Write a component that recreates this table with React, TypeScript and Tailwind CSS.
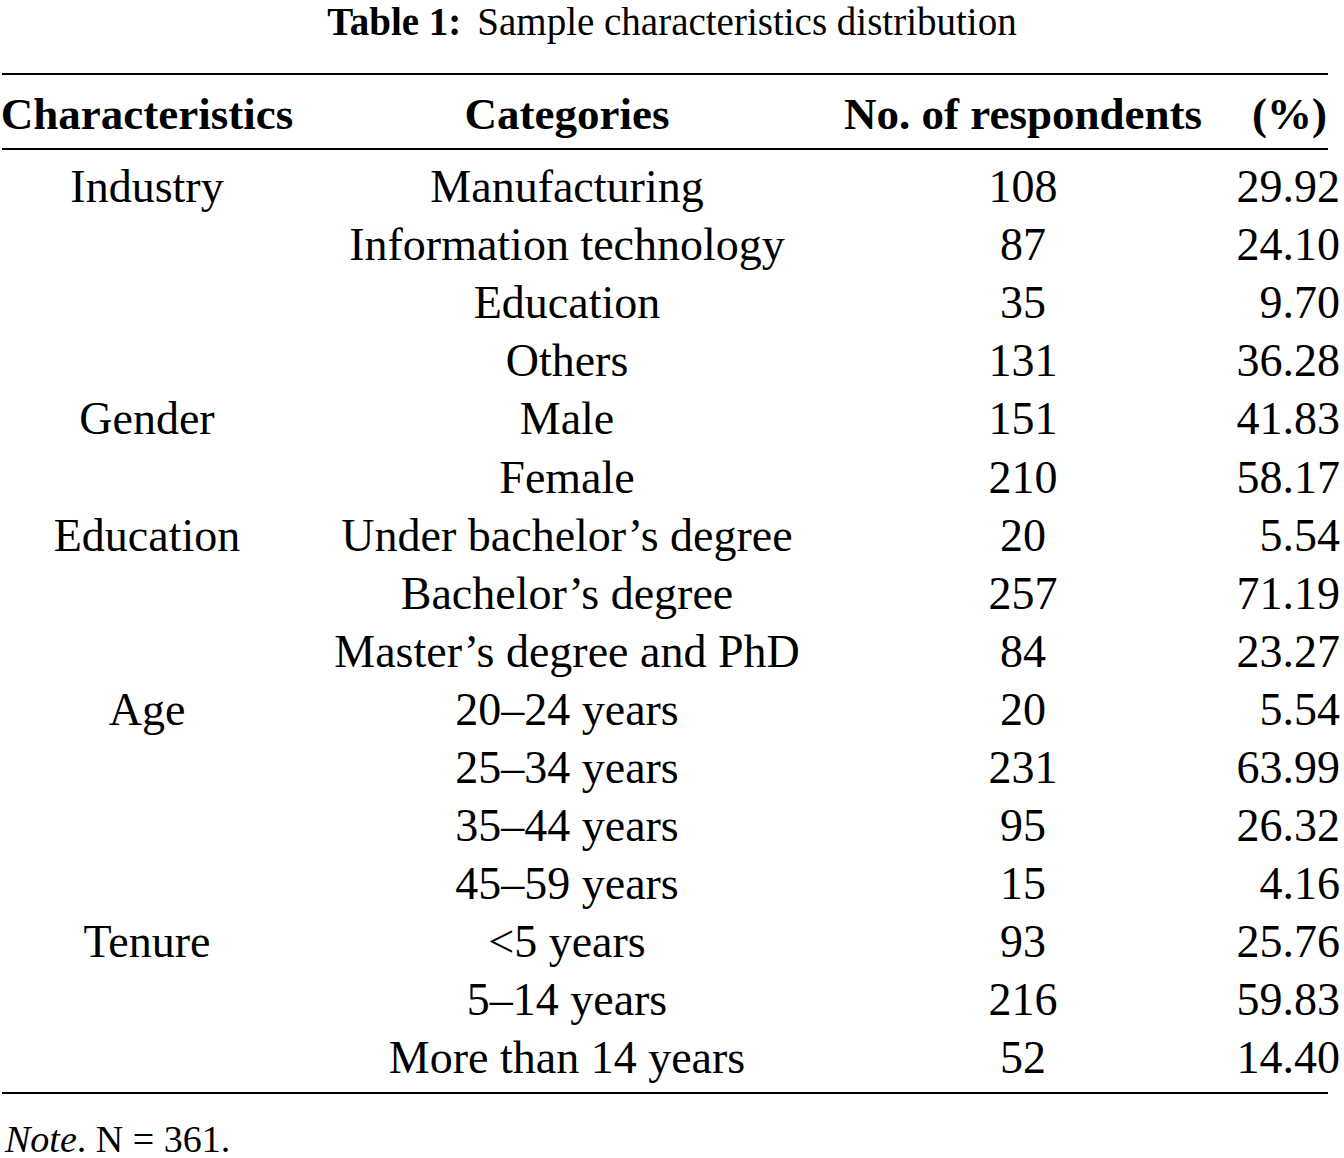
import React from "react";

const rows: [string, string, string, string][] = [
  ["Industry", "Manufacturing", "108", "29.92"],
  ["", "Information technology", "87", "24.10"],
  ["", "Education", "35", "9.70"],
  ["", "Others", "131", "36.28"],
  ["Gender", "Male", "151", "41.83"],
  ["", "Female", "210", "58.17"],
  ["Education", "Under bachelor\u2019s degree", "20", "5.54"],
  ["", "Bachelor\u2019s degree", "257", "71.19"],
  ["", "Master\u2019s degree and PhD", "84", "23.27"],
  ["Age", "20\u201324 years", "20", "5.54"],
  ["", "25\u201334 years", "231", "63.99"],
  ["", "35\u201344 years", "95", "26.32"],
  ["", "45\u201359 years", "15", "4.16"],
  ["Tenure", "<5 years", "93", "25.76"],
  ["", "5\u201314 years", "216", "59.83"],
  ["", "More than 14 years", "52", "14.40"],
];

export default function App() {
  return (
    <div
      className="w-[1344px] h-[1158px] bg-white text-black overflow-hidden"
      style={{ fontFamily: '"Liberation Serif", "Times New Roman", serif' }}
    >
      <div className="h-[42px] pt-[1px] flex items-center justify-center text-[39px] leading-[40px]">
        <span className="font-bold">Table 1:</span>
        <span className="ml-[16px]">Sample characteristics distribution</span>
      </div>
      <div className="h-[31px]" />
      <div className="ml-[2px] w-[1326px] h-[2px] bg-black" />
      <div className="h-[73px] pt-[6px] grid grid-cols-[294px_546px_366px_138px] items-center text-[45px] font-bold leading-none">
        <div className="text-center">Characteristics</div>
        <div className="text-center">Categories</div>
        <div className="text-center">No. of respondents</div>
        <div className="text-right pr-[17px]">(%)</div>
      </div>
      <div className="ml-[2px] w-[1326px] h-[2px] bg-black" />
      <div className="pt-[8px]">
        {rows.map((r, i) => (
          <div
            key={i}
            className="h-[58.1px] grid grid-cols-[294px_546px_366px_138px] items-center text-[46px] leading-none"
          >
            <div className="text-center whitespace-nowrap">{r[0]}</div>
            <div className="text-center whitespace-nowrap">{r[1]}</div>
            <div className="text-center">{r[2]}</div>
            <div className="text-right pr-[4px]">{r[3]}</div>
          </div>
        ))}
      </div>
      <div className="h-[4px]" />
      <div className="ml-[2px] w-[1326px] h-[2px] bg-black" />
      <div className="h-[26px]" />
      <div className="h-[38px] flex items-center pl-[5px] text-[38px] leading-[38px]">
        <span className="italic">Note</span>. N = 361.
      </div>
    </div>
  );
}
